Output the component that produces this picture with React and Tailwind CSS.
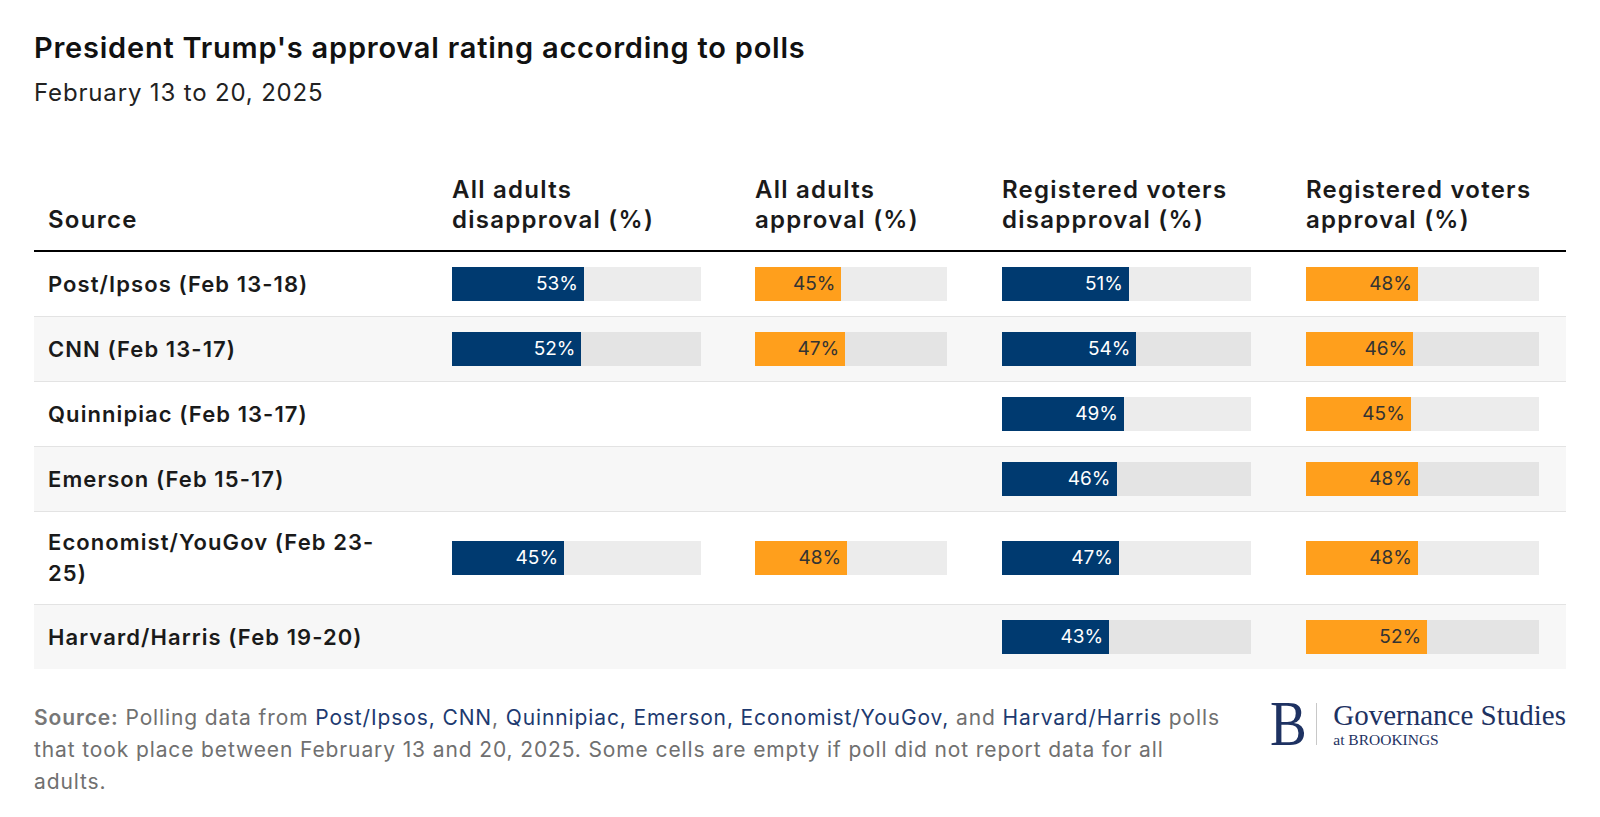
import React from 'react';

const rows = [
    { source: 'Post/Ipsos (Feb 13-18)', v: [53, 45, 51, 48] },
    { source: 'CNN (Feb 13-17)', v: [52, 47, 54, 46] },
    { source: 'Quinnipiac (Feb 13-17)', v: [null, null, 49, 45] },
    { source: 'Emerson (Feb 15-17)', v: [null, null, 46, 48] },
    { source: 'Economist/YouGov (Feb 23-25)', v: [45, 48, 47, 48] },
    { source: 'Harvard/Harris (Feb 19-20)', v: [null, null, 43, 52] },
];

const barWidths = ['w-[249px]', 'w-[192px]', 'w-[249px]', 'w-[233px]'];

function Bar({ value, col, shaded }) {
    if (value == null) return <div />;
    const navy = col % 2 === 0;
    return (
        <div className="pl-[14px]">
            <div className={`${barWidths[col]} h-[34px] flex ${shaded ? 'bg-[#e4e4e4]' : 'bg-[#ececec]'}`}>
                <div
                    className={`h-full flex items-center justify-end pr-[6px] text-[19px] ${
                        navy ? 'bg-[#003a70] text-white' : 'bg-[#ff9f1c] text-[#333]'
                    }`}
                    style={{ width: `${value}%` }}
                >
                    {value}%
                </div>
            </div>
        </div>
    );
}

function App() {
    return (
        <div className="w-[1600px] h-[817px] bg-white px-[34px] pt-[30px] text-[#1a1a1a] font-['Inter',sans-serif]">
            <h1 className="text-[29px] leading-[36px] font-semibold tracking-[0.77px] text-[#111]">
                President Trump's approval rating according to polls
            </h1>
            <p className="mt-[12px] text-[24px] leading-[30px] tracking-[0.84px] text-[#222]">February 13 to 20, 2025</p>

            <div className="mt-[67px]">
                <div className="grid grid-cols-[404px_303px_247px_304px_274px] items-end pb-[15px] border-b-2 border-black text-[24px] leading-[30px] font-semibold tracking-[1.25px]">
                    <div className="pl-[14px]">Source</div>
                    <div className="pl-[14px]">All adults<br />disapproval (%)</div>
                    <div className="pl-[14px]">All adults<br />approval (%)</div>
                    <div className="pl-[14px]">Registered voters<br />disapproval (%)</div>
                    <div className="pl-[14px]">Registered voters<br />approval (%)</div>
                </div>
                {rows.map((r, i) => {
                    const shaded = i % 2 === 1;
                    const last = i === rows.length - 1;
                    return (
                        <div
                            key={r.source}
                            className={`grid grid-cols-[404px_303px_247px_304px_274px] items-center py-[15px] ${
                                shaded ? 'bg-[#f7f7f7]' : 'bg-white'
                            } ${last ? '' : 'border-b border-[#e3e3e3]'}`}
                        >
                            <div className="pl-[14px] pr-[36px] text-[22px] leading-[31px] font-semibold tracking-[1.08px]">
                                {r.source}
                            </div>
                            {r.v.map((v, c) => (
                                <Bar key={c} value={v} col={c} shaded={shaded} />
                            ))}
                        </div>
                    );
                })}
            </div>

            <div className="mt-[33px] flex justify-between items-start">
                <p className="w-[1230px] text-[21px] leading-[32px] tracking-[0.88px] text-[#707070]">
                    <span className="font-semibold text-[#777]">Source:</span> Polling data from{' '}
                    <span className="text-[#1d3a70]">Post/Ipsos, CNN</span>,{' '}
                    <span className="text-[#1d3a70]">Quinnipiac, Emerson, Economist/YouGov,</span> and{' '}
                    <span className="text-[#1d3a70]">Harvard/Harris</span> polls
                    <br />
                    that took place between February 13 and 20, 2025. Some cells are empty if poll did not report data for all
                    <br />
                    adults.
                </p>
                <div className="flex items-center -mt-[2px] text-[#1e3262] font-['Liberation_Serif',serif]">
                    <div className="text-[64px] leading-[48px] scale-x-[0.86] origin-left w-[34px]">B</div>
                    <div className="w-px h-[42px] bg-[#c8c8c8] ml-[12px] mr-[16px]" />
                    <div className="flex flex-col">
                        <span className="text-[29px] leading-[28px] whitespace-nowrap">Governance Studies</span>
                        <span className="text-[15.5px] leading-[16px] mt-[3px]">at BROOKINGS</span>
                    </div>
                </div>
            </div>
        </div>
    );
}

export default App;
